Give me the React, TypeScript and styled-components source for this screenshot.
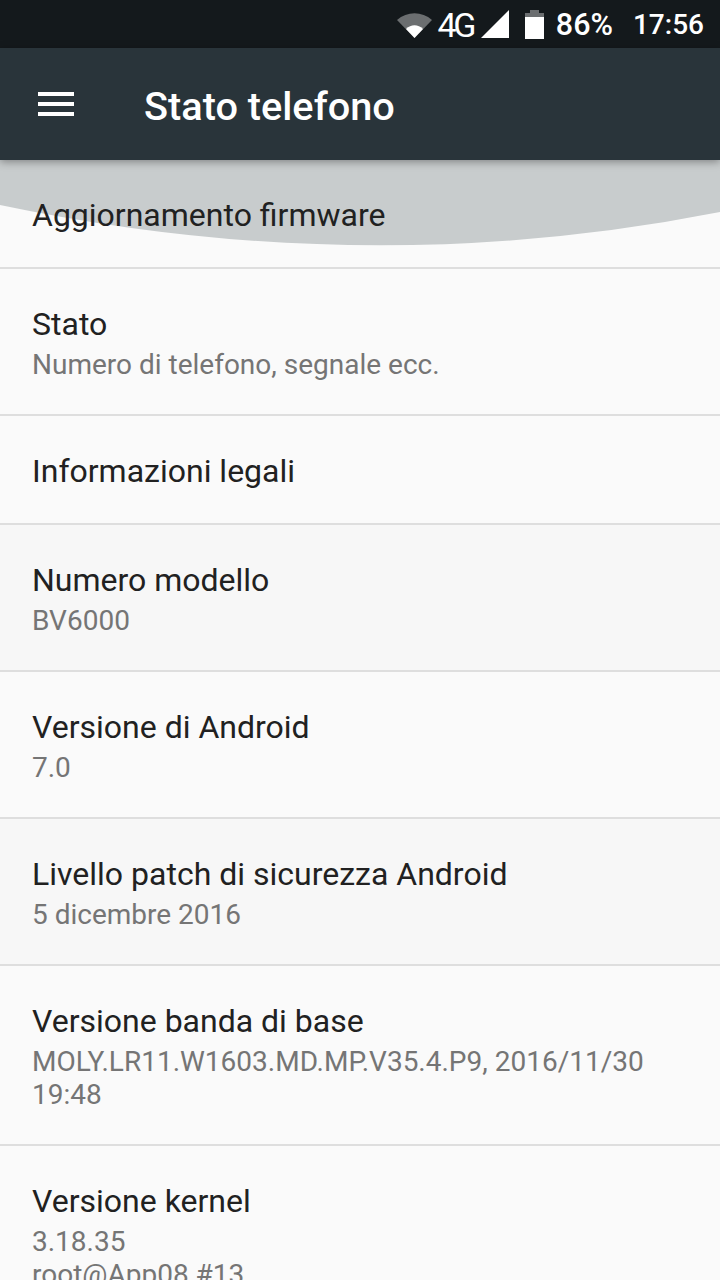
import React from 'react';
import styled, { createGlobalStyle } from 'styled-components';

const Global = createGlobalStyle`
  html, body {
    margin: 0;
    padding: 0;
    height: 100%;
    overflow: hidden;
    background: #fafafa;
  }
`;

const Screen = styled.div`
  position: relative;
  width: 720px;
  height: 1280px;
  overflow: hidden;
  background: #fafafa;
  font-family: Roboto, "Liberation Sans", sans-serif;
`;

const StatusBar = styled.div`
  height: 48px;
  background: #14191c;
  display: flex;
  align-items: center;
  justify-content: flex-end;
  padding-right: 16px;
  color: #fff;
  font-size: 28px;
  font-weight: 500;
`;

const NetworkLabel = styled.span`
  font-size: 34px;
  font-weight: 400;
  letter-spacing: -3.5px;
  margin: 2px 8px 0 5px;
`;

const BatteryIcon = styled.svg`
  margin-left: 16px;
  margin-right: 12px;
`;

const Percent = styled.span`
  font-size: 30.5px;
  margin-top: 1px;
`;

const Clock = styled.span`
  margin-left: 20px;
  margin-top: 1px;
`;

const Toolbar = styled.header`
  position: relative;
  z-index: 2;
  height: 112px;
  background: #29343a;
  display: flex;
  align-items: center;
  padding-left: 38px;
  box-shadow: 0 2px 8px rgba(0, 0, 0, 0.35);
`;

const MenuIcon = styled.div`
  width: 36px;
  height: 24px;
  margin-right: 70px;
  display: flex;
  flex-direction: column;
  justify-content: space-between;

  span {
    height: 4px;
    background: #fff;
  }
`;

const Title = styled.h1`
  margin: 6px 0 0;
  color: #fff;
  font-size: 39.7px;
  font-weight: 500;
  line-height: 1;
`;

const Glow = styled.svg`
  position: absolute;
  top: 160px;
  left: 0;
  z-index: 1;
`;

const List = styled.div`
  display: flex;
  flex-direction: column;
`;

const Row = styled.div<{ $shaded?: boolean; $height: number }>`
  height: ${(p) => p.$height}px;
  box-sizing: border-box;
  padding: 3px 32px 0;
  display: flex;
  flex-direction: column;
  justify-content: center;
  flex-shrink: 0;
  border-bottom: 2px solid #dedede;
  background: ${(p) => (p.$shaded ? '#f7f7f7' : '#fafafa')};
`;

const KernelRow = styled(Row)`
  justify-content: flex-start;
  padding-top: 36px;
  border-bottom: none;
`;

const RowTitle = styled.div`
  position: relative;
  z-index: 2;
  color: #212121;
  font-size: 32px;
  line-height: 38px;
`;

const RowSummary = styled.div`
  color: #757575;
  font-size: 28px;
  line-height: 33px;
  margin-top: 5px;
  white-space: nowrap;
`;

const rows = [
  { title: 'Aggiornamento firmware', height: 109 },
  { title: 'Stato', summary: ['Numero di telefono, segnale ecc.'], height: 147 },
  { title: 'Informazioni legali', height: 109 },
  { title: 'Numero modello', summary: ['BV6000'], height: 147, shaded: true },
  { title: 'Versione di Android', summary: ['7.0'], height: 147 },
  { title: 'Livello patch di sicurezza Android', summary: ['5 dicembre 2016'], height: 147, shaded: true },
  {
    title: 'Versione banda di base',
    summary: ['MOLY.LR11.W1603.MD.MP.V35.4.P9, 2016/11/30', '19:48'],
    height: 180,
  },
];

export default function App() {
  return (
    <Screen>
      <Global />
      <StatusBar>
        <svg width="36" height="28" viewBox="0 0 36 28">
          <path d="M0 10 C10 1 25 1 35 10 L17.5 28 Z" fill="#6b6e70" />
          <path d="M9 19 C14 14 21 14 26 19 L17.5 28 Z" fill="#fff" />
        </svg>
        <NetworkLabel>4G</NetworkLabel>
        <svg width="28" height="28" viewBox="0 0 28 28">
          <path d="M0 28 L28 0 V28 Z" fill="#fff" />
        </svg>
        <BatteryIcon width="19" height="29" viewBox="0 0 19 29">
          <rect x="0" y="4" width="19" height="25" fill="#fff" />
          <path d="M5 0 H14 V3 H19 V7 H0 V3 H5 Z" fill="#6b6e70" />
        </BatteryIcon>
        <Percent>86%</Percent>
        <Clock>17:56</Clock>
      </StatusBar>
      <Toolbar>
        <MenuIcon>
          <span />
          <span />
          <span />
        </MenuIcon>
        <Title>Stato telefono</Title>
      </Toolbar>
      <Glow width="720" height="90" viewBox="0 0 720 90">
        <path d="M0 0 H720 V52 Q365 122 0 45 Z" fill="#c8cccd" />
      </Glow>
      <List>
        {rows.map((r) => (
          <Row key={r.title} $height={r.height} $shaded={r.shaded}>
            <RowTitle>{r.title}</RowTitle>
            {r.summary && (
              <RowSummary>
                {r.summary.map((line) => (
                  <div key={line}>{line}</div>
                ))}
              </RowSummary>
            )}
          </Row>
        ))}
        <KernelRow $height={200}>
          <RowTitle>Versione kernel</RowTitle>
          <RowSummary>
            <div>3.18.35</div>
            <div>root@App08 #13</div>
          </RowSummary>
        </KernelRow>
      </List>
    </Screen>
  );
}
